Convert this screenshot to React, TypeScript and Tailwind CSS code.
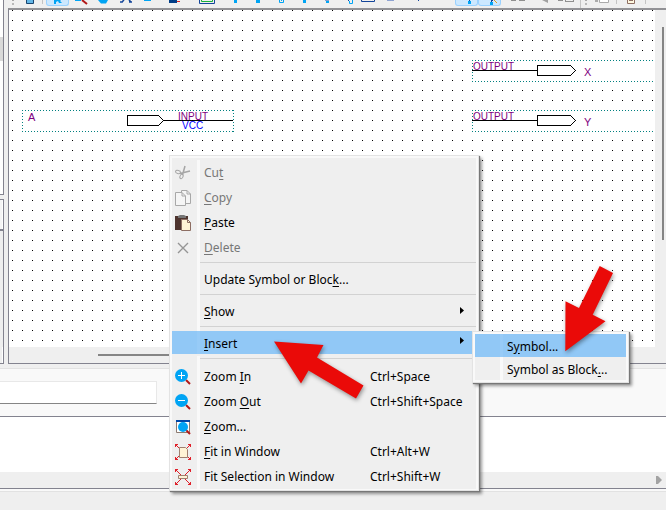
import type { ReactNode } from "react";

const BLUE = "#00a4f4";
const NAVY = "#12449a";

/* ---------- toolbar ---------- */

function Tool({ label, active, children }: { label: string; active?: boolean; children?: ReactNode }) {
  return (
    <button
      type="button"
      aria-label={label}
      className={
        active
          ? "h-[6px] w-[23px] shrink-0 rounded-b-[3px] border border-t-0 border-[#99d1ff] bg-[#cce8ff]"
          : "h-[6px] w-[23px] shrink-0"
      }
    >
      <svg viewBox="0 0 23 6" className={active ? "-ml-px block h-[6px] w-[23px] overflow-visible" : "block h-[6px] w-[23px] overflow-visible"}>
        {children}
      </svg>
    </button>
  );
}

function Divider() {
  return <span className="h-[4px] w-px shrink-0 bg-[#c4c4c4]" />;
}

function Grip() {
  return (
    <span className="flex w-[2px] shrink-0 flex-col gap-[2px]">
      <span className="h-px bg-[#a8a8a8]" />
      <span className="h-[2px] bg-[#b8b8b8]" />
    </span>
  );
}

function Toolbar() {
  return (
    <div role="toolbar" aria-label="Drawing tools" className="flex h-[8px] shrink-0 items-start overflow-hidden bg-[#efefef] pl-[4px]">
      <Grip />
      <div className="flex pl-[5px]">
        <Tool label="Detach window">
          <path d="M7.500 0V3.500H14.500V0" fill="#63b6e6" stroke="#17446f" />
        </Tool>
      </div>
      <Divider />
      <div className="flex pl-[3px]">
        <Tool label="Select" active>
          <path d="M8 0H15L14 1L16 3H13L12 1L10 2V4H8Z" fill={BLUE} />
        </Tool>
        <Tool label="Zoom">
          <path d="M6 0H12V1H6Z" fill={BLUE} />
          <path d="M13 0L18 4" stroke="#b01818" strokeWidth="2" />
        </Tool>
        <Tool label="Pan">
          <path d="M6 0H16L14 3.500H9Z" fill={BLUE} />
        </Tool>
        <Tool label="Text">
          <path d="M7 2L9 0M14 0L16 2M5 2H8M14 2H17" stroke={NAVY} strokeWidth="1.500" />
        </Tool>
        <Tool label="Symbol">
          <path d="M6 0H13V1H6Z" fill={BLUE} />
        </Tool>
        <Tool label="Gate">
          <path d="M8 0H16V3H8Z" fill="#003d86" />
          <path d="M16 1.500H19" stroke="#d22" />
        </Tool>
      </div>
      <div className="flex pl-[12px]">
        <Tool label="Block">
          <path d="M3.500 0V3.500H18.500V0" fill="none" stroke={NAVY} />
          <path d="M5.500 0V1.500H16.500V0" fill="none" stroke="#18b13a" />
        </Tool>
      </div>
      <div className="flex pl-[5px]">
        <Tool label="Node">
          <path d="M10 0H13V3H10Z" fill={BLUE} />
        </Tool>
        <Tool label="Bus">
          <path d="M9 0H13V3H9Z" fill={BLUE} />
        </Tool>
        <Tool label="Conduit">
          <path d="M9.500 0V2.500H13.500V0M11.500 0V1" fill="none" stroke={BLUE} />
        </Tool>
        <Tool label="Diagonal node">
          <path d="M10 0H13V3H10Z" fill={BLUE} />
        </Tool>
        <Tool label="Diagonal bus">
          <path d="M9 0H13V1H9Z" fill="#7f9fd0" />
          <path d="M10 1H13V3H10Z" fill={BLUE} />
        </Tool>
        <Tool label="Diagonal conduit">
          <path d="M10.500 1V3.500H13.500V0" fill="none" stroke={BLUE} />
          <path d="M9 0H10V1H9Z" fill={NAVY} />
        </Tool>
        <Tool label="Rectangle">
          <path d="M-0.500 0V1.500H12.500V0" fill="none" stroke={NAVY} />
        </Tool>
        <Tool label="Oval">
          <path d="M2 0.500H9" stroke="#8ea3d2" />
        </Tool>
        <Tool label="Line">
          <path d="M10 0H11V1H10Z" fill={NAVY} />
        </Tool>
      </div>
      <div className="flex pl-[24px]">
        <Tool label="Rubberbanding" active>
          <path d="M14.500 0V1" stroke={NAVY} />
          <path d="M13 1H16V4H13Z" fill={BLUE} />
        </Tool>
        <Tool label="Partial line selection" active>
          <path d="M13.500 0V2M14 0L15 1" stroke={NAVY} />
          <path d="M12 2H15V5H12Z" fill={BLUE} />
          <path d="M16 0L19 3" stroke="#e39a1d" />
        </Tool>
      </div>
      <div className="flex pl-[8px]">
        <Tool label="Flip horizontal">
          <path d="M2 0.500H7M10 0.500H16" stroke="#8f8f8f" />
        </Tool>
        <Tool label="Flip vertical">
          <path d="M10 0H16V3Z" fill="#a0a0a0" />
        </Tool>
        <Tool label="Rotate">
          <path d="M3 0.500H8M10 1.500H19M10.500 0V2M18.500 0V2" stroke="#8f8f8f" />
        </Tool>
      </div>
      <span className="ml-[2px] h-[8px] w-px bg-[#c4c4c4]" />
      <div className="flex pl-[4px]">
        <Grip />
      </div>
      <div className="flex pl-[3px]">
        <Tool label="Print">
          <path d="M5 0H8V2H5Z" fill="#aaa" />
          <path d="M9.500 0V2.500H18.500V0" fill="#fff" stroke="#aaa" />
        </Tool>
      </div>
      <div className="flex pl-[3px]">
        <Divider />
      </div>
      <div className="flex pl-[3px]">
        <Tool label="Report">
          <path d="M7.500 0V3.500H14.500V0" fill="#fff8df" stroke="#8d6e63" />
          <path d="M9 0.500H13" stroke="#8d6e63" />
        </Tool>
      </div>
      <div className="flex pl-[2px]">
        <Divider />
      </div>
    </div>
  );
}

/* ---------- schematic ---------- */

const GRID_ROWS = Array.from({ length: 100 }, (_, row) => 10 + row * 10);

function OutputPin({ y, name }: { y: number; name: string }) {
  return (
    <g>
      <rect x="472" y={y - 10} width="184" height="22" fill="#fff" />
      <path
        d={`M472 ${y - 9.5}H656M472.500 ${y - 10}V${y + 12}M472 ${y + 11.5}H656`}
        fill="none"
        stroke="#008080"
        strokeDasharray="1 2"
      />
      <text x="473" y={y} fontSize="10" fill="#800080">
        OUTPUT
      </text>
      <path d={`M472 ${y + 0.5}H537`} stroke="#000" />
      <path d={`M537.500 ${y - 4.5}H570.500L575.500 ${y + 0.5}L570.500 ${y + 5.5}H537.500Z`} fill="#fff" stroke="#000" />
      <text x="584" y={y + 6} fontSize="11" fill="#800080">
        {name}
      </text>
    </g>
  );
}

function Schematic() {
  return (
    <svg
      aria-label="Block diagram"
      className="block h-full min-w-0 flex-1 bg-white font-['Liberation_Sans',Arial,sans-serif]"
      shapeRendering="crispEdges"
    >
      <g transform="translate(-9 -10)">
        {GRID_ROWS.map((y) => (
          <path key={y} d={`M12 ${y + 0.5}H3000`} stroke="#000" strokeDasharray="1 9" />
        ))}
        <rect x="22" y="110" width="212" height="22" fill="#fff" />
        <path
          d="M22 110.500H234M233.500 110V132M22 131.500H234M22.500 110V132"
          fill="none"
          stroke="#008080"
          strokeDasharray="1 2"
        />
        <text x="28" y="121" fontSize="11" fill="#800080">
          A
        </text>
        <text x="178" y="120" fontSize="10" fill="#800080">
          INPUT
        </text>
        <text x="182" y="129" fontSize="10" fill="#0000ff">
          VCC
        </text>
        <path d="M163 120.500H233" stroke="#000" />
        <path d="M127.500 115.500H158.500L163.500 120.500L158.500 125.500H127.500Z" fill="#fff" stroke="#000" />
        <OutputPin y={70} name="X" />
        <OutputPin y={120} name="Y" />
      </g>
    </svg>
  );
}

/* ---------- menus ---------- */

type RowProps = {
  before?: string;
  hot: string;
  after?: string;
  icon?: ReactNode;
  keys?: string;
  submenu?: boolean;
  disabled?: boolean;
  single?: boolean;
};

function MenuRow({ before, hot, after, icon, keys, submenu, disabled, single }: RowProps) {
  return (
    <button
      type="button"
      role="menuitem"
      disabled={disabled}
      className={`flex w-full items-center text-left ${single ? "h-[24px]" : "h-[25px]"} ${
        disabled ? "text-[#777]" : "text-black"
      }`}
    >
      <span className="flex w-[25px] shrink-0 justify-center pr-[3px]">{icon}</span>
      <span className="h-full w-[3px] shrink-0 bg-[#f9f9f9]" />
      <span className="w-[166px] shrink-0 whitespace-pre pl-[4px]">
        {before}
        <span className="underline underline-offset-2">{hot}</span>
        {after}
      </span>
      <span className="flex-1 whitespace-nowrap pl-[4px]">{keys}</span>
      {submenu && <Caret />}
    </button>
  );
}

function Caret() {
  return (
    <svg viewBox="0 0 4 7" className="mr-[12px] mb-[4px] h-[7px] w-[4px] shrink-0">
      <path d="M0 0L4 3.500L0 7Z" fill="#000" />
    </svg>
  );
}

function Separator() {
  return (
    <div role="separator" className="flex h-[8px]">
      <span className="w-[25px]" />
      <span className="w-[3px] bg-[#f9f9f9]" />
      <span className="mt-[2px] h-px flex-1 bg-[#d2d2d2]" />
    </div>
  );
}

function Icon({ children }: { children: ReactNode }) {
  return (
    <svg viewBox="0 0 16 16" className="h-[16px] w-[16px]" fill="none">
      {children}
    </svg>
  );
}

const cutIcon = (
  <Icon>
    <path d="M5 8.500L15 6M7.500 10L10 1" stroke="#a5a5a5" strokeWidth="1.500" />
    <ellipse cx="3" cy="7" rx="2.500" ry="1.500" stroke="#a5a5a5" transform="rotate(15 3 7)" />
    <ellipse cx="6.500" cy="11.500" rx="1.500" ry="2.200" stroke="#a5a5a5" transform="rotate(25 6.500 11.500)" />
  </Icon>
);
const copyIcon = (
  <Icon>
    <path d="M6.500 0.500H12L15.500 4V13.500H6.500Z" fill="#f5f5f5" stroke="#a8a8a8" />
    <path d="M12 0.500V4H15.500" stroke="#a8a8a8" />
    <path d="M0.500 2.500H7L10.500 6V15.500H0.500Z" fill="#f5f5f5" stroke="#a8a8a8" />
    <path d="M7 2.500V6H10.500" stroke="#a8a8a8" />
  </Icon>
);
const pasteIcon = (
  <Icon>
    <path d="M0 1H13V15H0Z" fill="#4e342e" />
    <path d="M3 3V1L5 0H9L11 1V3Z" fill="#757575" />
    <path d="M6.500 4.500H12.500L15.500 7.500V15.500H6.500Z" fill="#fff3d6" stroke="#8d6e63" />
    <path d="M12.500 4.500V7.500H15.500" stroke="#8d6e63" />
  </Icon>
);
const deleteIcon = (
  <Icon>
    <path d="M3 3L13 13M13 3L3 13" stroke="#959595" strokeWidth="1.400" />
  </Icon>
);
const zoomInIcon = (
  <Icon>
    <path d="M11 11L15 15" stroke="#b01818" strokeWidth="2" />
    <circle cx="6.500" cy="6.500" r="6.500" fill={BLUE} />
    <path d="M6.500 3V10M3 6.500H10" stroke="#fff" />
  </Icon>
);
const zoomOutIcon = (
  <Icon>
    <path d="M11 11L15 15" stroke="#b01818" strokeWidth="2" />
    <circle cx="6.500" cy="6.500" r="6.500" fill={BLUE} />
    <path d="M3 6.500H10" stroke="#fff" />
  </Icon>
);
const zoomIcon = (
  <Icon>
    <path d="M1.500 2V13.500H14.500V2" fill="#fff" stroke="#8d7a70" />
    <path d="M1 1H15V3H1Z" fill="#0047a8" />
    <path d="M11 11L15 15" stroke="#b01818" strokeWidth="2" />
    <circle cx="8" cy="8" r="5" fill={BLUE} />
  </Icon>
);
const fitArrows = (
  <>
    <path d="M0 0L4 4M16 0L12 4M0 16L4 12M16 16L12 12" stroke="#e0202a" />
    <path d="M0.500 3V0.500H3M13 0.500H15.500V3M0.500 13V15.500H3M13 15.500H15.500V13" stroke="#e0202a" />
  </>
);
const fitIcon = (
  <Icon>
    {fitArrows}
    <path d="M4.500 3.500H10.500L12.500 5.500V13.500H4.500Z" fill="#fff3d6" stroke="#a08070" />
  </Icon>
);
const fitSelectionIcon = (
  <Icon>
    {fitArrows}
    <path d="M3 3L6 6M13 3L10 6M3 13L6 10M13 13L10 10" stroke="#e0202a" />
    <path d="M3.500 6.500H12.500V9.500H3.500Z" fill="#fff3d6" stroke="#a08070" />
  </Icon>
);

function ContextMenu() {
  return (
    <div
      role="menu"
      aria-label="Block diagram menu"
      className="absolute top-[155px] left-[169px] w-[310px] border border-[#e3e3e3] bg-[#efefef] text-[12px] leading-[16px] shadow-[1px_1px_1px_#777,3px_3px_3px_rgba(0,0,0,0.4)]"
    >
      <div className="border-2 border-b border-[#f9f9f9] pt-[2px]">
        <MenuRow before="Cu" hot="t" icon={cutIcon} disabled />
        <MenuRow hot="C" after="opy" icon={copyIcon} disabled />
        <MenuRow hot="P" after="aste" icon={pasteIcon} />
        <MenuRow hot="D" after="elete" icon={deleteIcon} disabled />
        <Separator />
        <MenuRow before="Update Symbol or Bloc" hot="k" after="..." single />
        <Separator />
        <MenuRow hot="S" after="how" submenu single />
        <Separator />
        <button
          type="button"
          role="menuitem"
          aria-expanded="true"
          className="-mt-px mb-[2px] flex h-[23px] w-full items-center bg-[#91c8f6] text-left text-black"
        >
          <span className="w-[25px] shrink-0" />
          <span className="h-full w-[3px] shrink-0 bg-[#97cbf7]" />
          <span className="flex-1 pt-[2px] pl-[4px]">
            <span className="underline underline-offset-2">I</span>nsert
          </span>
          <Caret />
        </button>
        <Separator />
        <MenuRow before="Zoom " hot="I" after="n" icon={zoomInIcon} keys="Ctrl+Space" />
        <MenuRow before="Zoom " hot="O" after="ut" icon={zoomOutIcon} keys="Ctrl+Shift+Space" />
        <MenuRow hot="Z" after="oom..." icon={zoomIcon} />
        <MenuRow hot="F" after="it in Window" icon={fitIcon} keys="Ctrl+Alt+W" />
        <MenuRow before="Fit Selection in Window" hot="" icon={fitSelectionIcon} keys="Ctrl+Shift+W" />
      </div>
    </div>
  );
}

function InsertMenu() {
  return (
    <div
      role="menu"
      aria-label="Insert"
      className="absolute top-[331px] left-[472px] w-[157px] border border-[#e3e3e3] bg-[#efefef] text-[12px] leading-[16px] shadow-[1px_1px_1px_#777,3px_3px_3px_rgba(0,0,0,0.4)]"
    >
      <div className="border-2 border-[#f9f9f9]">
        <button type="button" role="menuitem" className="flex h-[23px] w-full items-center bg-[#91c8f6] text-left">
          <span className="w-[25px] shrink-0" />
          <span className="h-full w-[3px] shrink-0 bg-[#97cbf7]" />
          <span className="pt-[2px] pl-[4px]">
            S<span className="underline underline-offset-2">y</span>mbol...
          </span>
        </button>
        <button type="button" role="menuitem" className="flex h-[23px] w-full items-center text-left">
          <span className="w-[25px] shrink-0" />
          <span className="h-full w-[3px] shrink-0 bg-[#f9f9f9]" />
          <span className="pt-[2px] pl-[4px] whitespace-nowrap">
            Symbol as Block<span className="underline underline-offset-2">.</span>..
          </span>
        </button>
      </div>
    </div>
  );
}

function Pointers() {
  return (
    <svg
      aria-hidden="true"
      viewBox="0 0 666 510"
      className="pointer-events-none absolute top-0 left-0 h-[510px] w-[666px] drop-shadow-[1px_2px_2px_rgba(0,0,0,0.4)]"
    >
      <path d="M274 341.500L323.500 345L317 357.500L363.500 385.500L356 398.500L308.500 370.500L301 383.500Z" fill="#ea0a08" />
      <path d="M565.300 351.300L565.500 301.300L579 308L599.700 266L613 273L592.700 314.700L605.500 321.300Z" fill="#ea0a08" />
    </svg>
  );
}

/* ---------- window ---------- */

export default function App() {
  return (
    <div className="relative flex h-screen flex-col overflow-hidden bg-[#efefef] font-['Noto_Sans',sans-serif] text-black">
      <div className="flex min-h-0 flex-1">
        <aside className="flex w-[4px] shrink-0 flex-col">
          <div className="flex h-[195px] flex-col border-r border-b border-[#83838f] bg-white">
            <div className="mt-[37px] h-[24px] bg-[#d9d9d9]" />
          </div>
          <div className="mt-[4px] flex flex-1 flex-col border-t border-r border-b border-[#83838f]">
            <div className="h-[29px] border-r border-white bg-[#f5f5f5]" />
            <div className="h-[2px] bg-[#83838f]" />
            <div className="flex-1" />
            <div className="h-[16px] border-r border-white" />
          </div>
        </aside>
        <main className="ml-[4px] flex min-w-0 flex-1 flex-col">
          <Toolbar />
          <div className="flex min-h-0 flex-1 flex-col border-t-2 border-b border-l border-[#83838f] border-t-[#929296]">
            <div className="flex min-h-0 flex-1">
              <Schematic />
              <div className="flex w-[11px] shrink-0 justify-end pt-[17px] pr-[2px]">
                <div className="h-[213px] w-[2px] bg-[#858585]" />
              </div>
            </div>
            <div className="h-[16px] shrink-0 pt-[7px] pl-[89px]">
              <div className="h-[2px] w-[300px] bg-[#858585]" />
            </div>
          </div>
        </main>
      </div>
      <section className="mt-[4px] flex shrink-0 flex-col border-t border-[#e2e2e2] bg-[#f9f9f9] pt-[12px]">
        <input
          aria-label="Filter messages"
          className="h-[23px] w-[157px] border border-l-0 border-[#e8e8e8] border-b-[#858585] bg-white px-1 text-[12px] outline-none"
        />
        <div className="mt-[12px] h-[73px] border-y border-[#83838f] bg-white">
          <div className="mt-[55px] flex h-[16px] items-center justify-end bg-[#efefef] pr-[4px]">
            <svg viewBox="0 0 6 8" className="h-[8px] w-[6px]">
              <path d="M0 0H2L6 4L2 8H0Z" fill="#a3a3a3" />
            </svg>
          </div>
        </div>
        <div className="h-[2px]" />
      </section>
      <footer className="h-[19px] shrink-0 border-t border-[#e2e2e2]" />
      <ContextMenu />
      <InsertMenu />
      <Pointers />
    </div>
  );
}
